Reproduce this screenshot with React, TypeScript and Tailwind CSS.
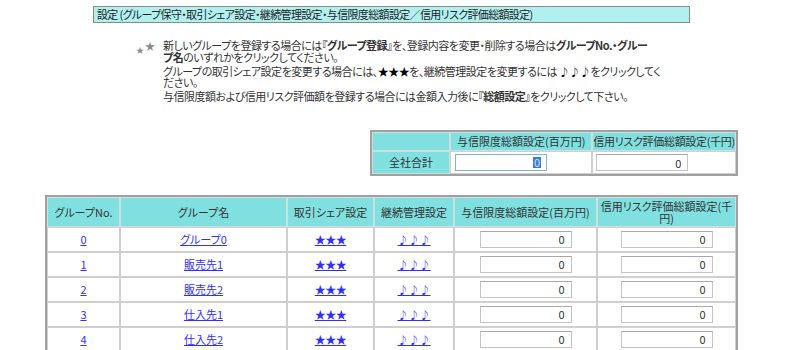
import React from "react";

const font = "[font-family:'Noto_Sans_CJK_JP','Liberation_Sans',sans-serif] [font-feature-settings:'palt']";

const groups = [
  { no: "0", name: "グループ0" },
  { no: "1", name: "販売先1" },
  { no: "2", name: "販売先2" },
  { no: "3", name: "仕入先1" },
  { no: "4", name: "仕入先2" },
];

const Amount = ({ value = "0" }: { value?: string }) => (
  <input
    readOnly
    value={value}
    className="w-[92px] h-[17px] border border-[#c4c4c4] border-t-[#a8a8a8] bg-white text-right pr-[6px] text-[11px] text-[#333] leading-none outline-none align-middle"
  />
);

const th = "border border-[#cfdede] bg-[#80e0e0] text-[#333] font-normal text-center text-[11px] leading-[12px] p-0";
const td = "border border-[#cfcfcf] text-center text-[11px] leading-[12px] h-[25px] p-0";
const link = "text-[#2f2fff] underline";

export default function App() {
  return (
    <div className={`w-[800px] h-[350px] overflow-hidden bg-white text-[#333] text-[11px] ${font}`}>
      <div className="ml-[93px] mt-[6px] w-[597px] h-[17px] border border-[#8a8a8a] bg-[#b2f0f0] pl-[3px] leading-[15px] tracking-[-0.65px] text-[#222]">
        設定 (グループ保守・取引シェア設定・継続管理設定・与信限度総額設定／信用リスク評価総額設定)
      </div>

      <div className="flex mt-[17px] ml-[136px]">
        <div className="relative w-[27px] h-[14px] text-[#8a8a8a]">
          <span className="absolute left-0 top-[6px] text-[8px] leading-none">★</span>
          <span className="absolute left-[9px] top-[1px] text-[10px] leading-none">★</span>
        </div>
        <div className="w-[500px] leading-[11.5px] tracking-[-0.5px] whitespace-nowrap">
          <p>
            新しいグループを登録する場合には<b>『グループ登録』</b>を、登録内容を変更・削除する場合は<b>グループNo.・グルー</b>
            <br />
            <b>プ名</b>のいずれかをクリックしてください。
          </p>
          <p className="mt-[2.5px]">
            グループの取引シェア設定を変更する場合には、<span className="text-black">★★★</span>を、継続管理設定を変更するには <b className="text-black">♪♪♪</b>をクリックしてく
            <br />
            ださい。
          </p>
          <p className="mt-[2.5px]">
            与信限度額および信用リスク評価額を登録する場合には金額入力後に<b>『総額設定』</b>をクリックして下さい。
          </p>
        </div>
      </div>

      <table className="ml-[370px] mt-[27px] w-[368px] border-2 border-[#a0a0a0] border-separate border-spacing-0">
        <thead>
          <tr>
            <th className={`${th} w-[82px] h-[19px]`}></th>
            <th className={`${th} w-[143px] whitespace-nowrap`}>与信限度総額設定(百万円)</th>
            <th className={`${th} whitespace-nowrap tracking-[-0.3px]`}>信用リスク評価総額設定(千円)</th>
          </tr>
        </thead>
        <tbody>
          <tr>
            <td className={`${th} h-[23px]`}>全社合計</td>
            <td className="border border-[#cfcfcf] p-0 pl-[4px]">
              <div className="w-[92px] h-[17px] border border-[#7eb4ea] bg-white flex items-center justify-end pr-[5px] text-[11px] leading-none">
                <span className="bg-[#3a7bd5] text-[#cfe3ff] px-[1px]">0</span>
              </div>
            </td>
            <td className="border border-[#cfcfcf] p-0 pl-[3px]">
              <Amount />
            </td>
          </tr>
        </tbody>
      </table>

      <table className="ml-[45px] mt-[19px] w-[693px] border-2 border-[#a0a0a0] border-separate border-spacing-0">
        <thead>
          <tr>
            <th className={`${th} w-[73px] h-[30px]`}>グループNo.</th>
            <th className={`${th} w-[167px]`}>グループ名</th>
            <th className={`${th} w-[87px]`}>取引シェア設定</th>
            <th className={`${th} w-[80px]`}>継続管理設定</th>
            <th className={`${th} w-[143px]`}>与信限度総額設定(百万円)</th>
            <th className={`${th}`}>
              信用リスク評価総額設定(千
              <br />
              円)
            </th>
          </tr>
        </thead>
        <tbody>
          {groups.map((g) => (
            <tr key={g.no}>
              <td className={td}>
                <a className={link}>{g.no}</a>
              </td>
              <td className={td}>
                <a className={link}>{g.name}</a>
              </td>
              <td className={td}>
                <a className={`${link} font-bold tracking-[-0.5px]`}>★★★</a>
              </td>
              <td className={td}>
                <a className={link}>♪♪♪</a>
              </td>
              <td className={td}>
                <Amount />
              </td>
              <td className={td}>
                <Amount />
              </td>
            </tr>
          ))}
        </tbody>
      </table>
    </div>
  );
}
